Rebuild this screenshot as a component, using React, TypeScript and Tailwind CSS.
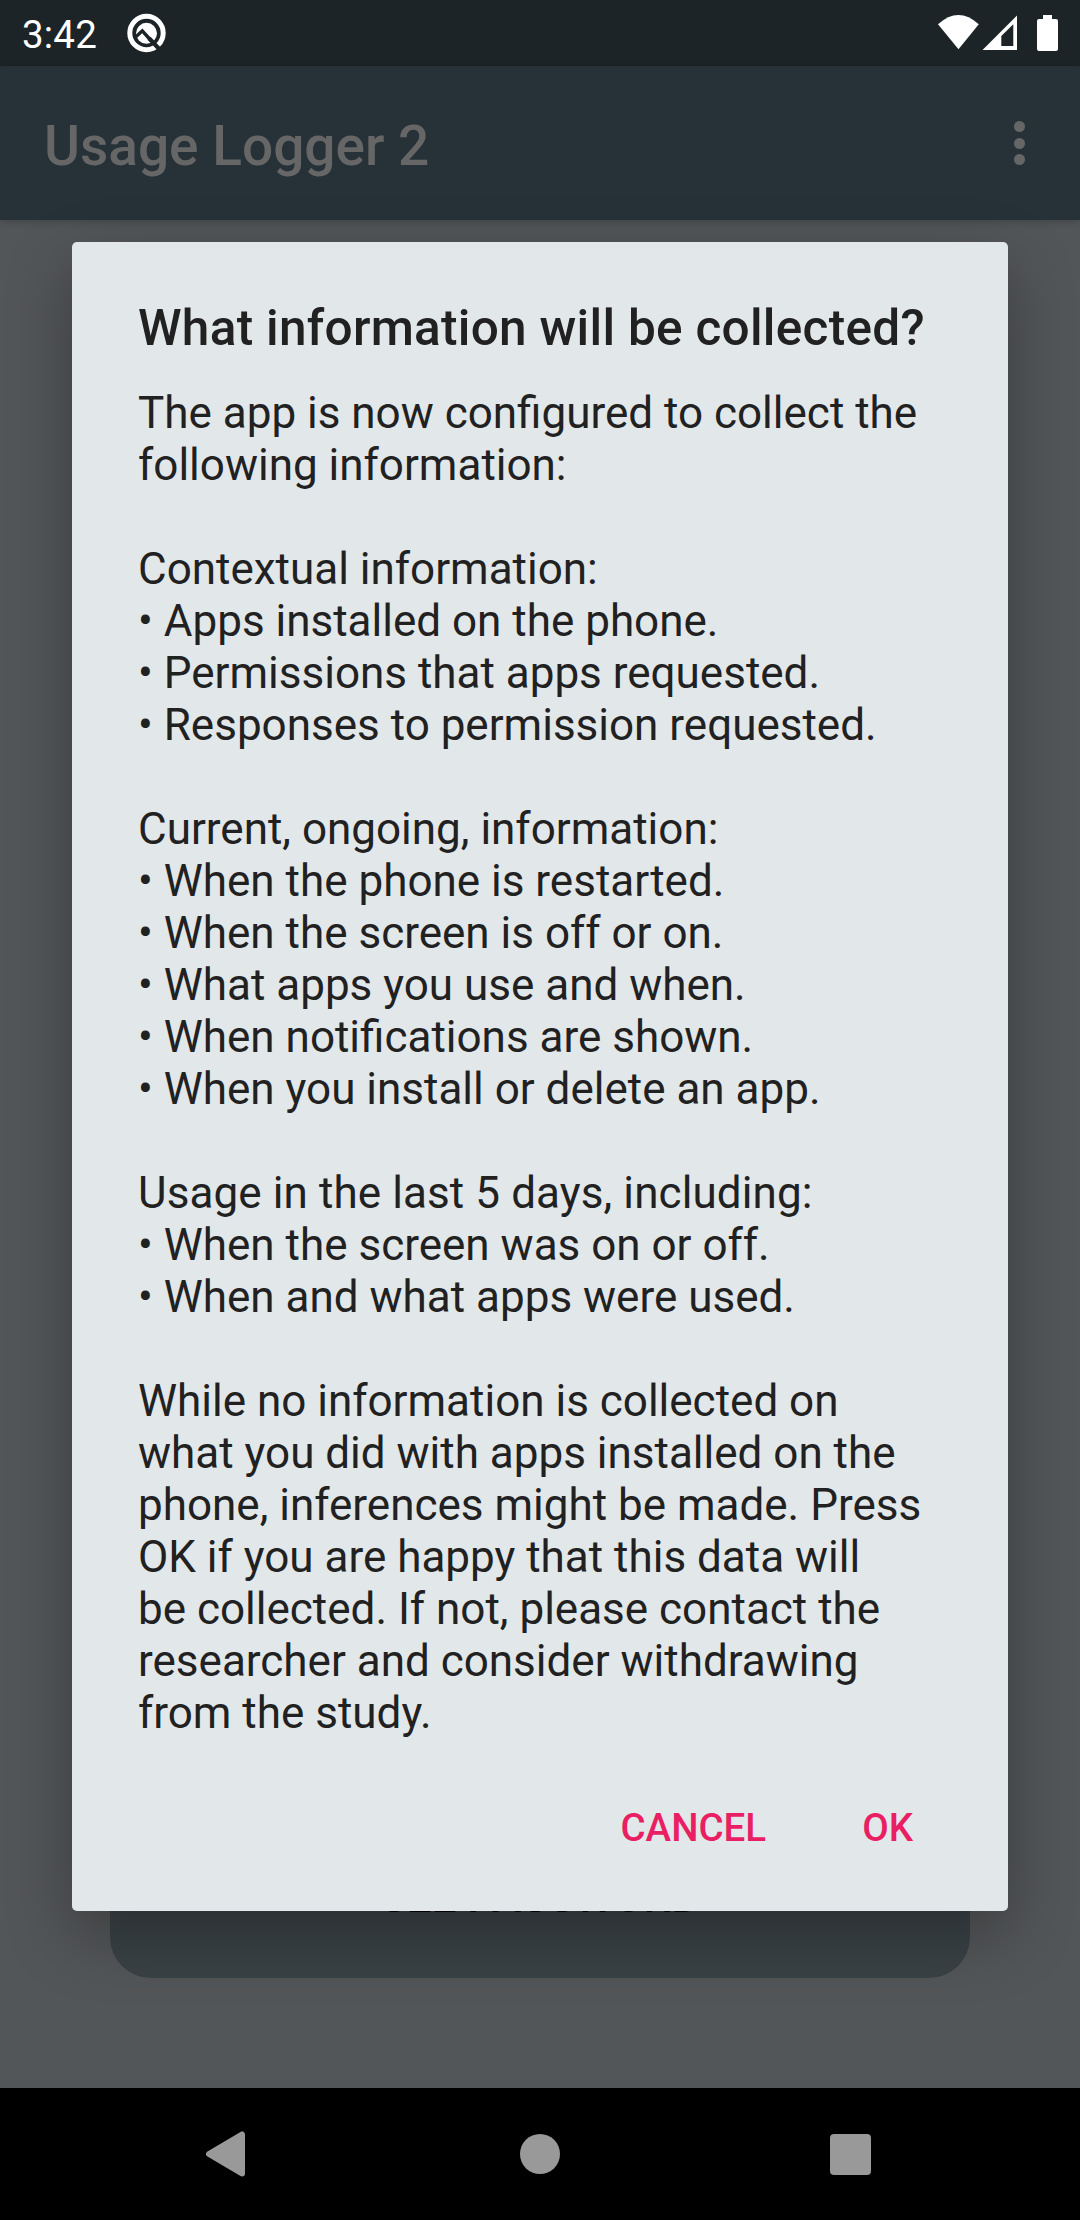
import React from "react";

const lines = [
  "The app is now configured to collect the",
  "following information:",
  "",
  "Contextual information:",
  "• Apps installed on the phone.",
  "• Permissions that apps requested.",
  "• Responses to permission requested.",
  "",
  "Current, ongoing, information:",
  "• When the phone is restarted.",
  "• When the screen is off or on.",
  "• What apps you use and when.",
  "• When notifications are shown.",
  "• When you install or delete an app.",
  "",
  "Usage in the last 5 days, including:",
  "• When the screen was on or off.",
  "• When and what apps were used.",
  "",
  "While no information is collected on",
  "what you did with apps installed on the",
  "phone, inferences might be made. Press",
  "OK if you are happy that this data will",
  "be collected. If not, please contact the",
  "researcher and consider withdrawing",
  "from the study.",
];

function StatusBar() {
  return (
    <div className="flex h-[66px] shrink-0 items-start bg-[#1c2428] pl-[22px] text-white">
      <span className="mt-3 w-[105px] text-[38.5px] leading-[45px] tracking-[0.2px]">3:42</span>
      <svg className="mt-[13px]" width="40" height="40" viewBox="0 0 40 40">
        <circle cx="19.5" cy="20" r="16.7" fill="none" stroke="#fff" strokeWidth="5" />
        <circle cx="19.5" cy="20.3" r="10.5" fill="#fff" />
        <path d="M7 25.5 15.3 17.8 24 27.5" fill="none" stroke="#1c2428" strokeWidth="3.4" />
        <path d="M22 25.2 36 40" fill="none" stroke="#1c2428" strokeWidth="4.2" />
      </svg>
      <svg className="ml-auto mr-[22px]" width="120" height="66" viewBox="0 0 120 66">
        <path d="M0 24.3Q20.4 5.7 40.8 24.3L20.5 49.3Z" fill="#fff" />
        <path d="M44.5 50 79 15.5V50ZM63.3 46H75.3V24.3L63.3 36Z" fill="#fff" fillRule="evenodd" />
        <path d="M105 15h9v4h4a2 2 0 0 1 2 2v28a2 2 0 0 1-2 2h-17a2 2 0 0 1-2-2V21a2 2 0 0 1 2-2h4z" fill="#fff" />
      </svg>
    </div>
  );
}

export default function App() {
  return (
    <div className="relative flex h-[2220px] w-[1080px] flex-col overflow-hidden bg-[#535658] font-['Roboto',sans-serif]">
      <StatusBar />
      <header className="z-10 flex h-[154px] shrink-0 items-center justify-between bg-[#263238] pr-[55px] pl-11 text-[#666] shadow-[0_2px_8px_rgba(0,0,0,0.2)]">
        <h1 className="mt-[5px] text-[55px] leading-16 font-medium">Usage Logger 2</h1>
        <div className="flex flex-col gap-[5.5px]">
          <i className="size-[11px] rounded-full bg-[#666]" />
          <i className="size-[11px] rounded-full bg-[#666]" />
          <i className="size-[11px] rounded-full bg-[#666]" />
        </div>
      </header>
      <main className="flex flex-1 flex-col justify-end px-[110px] pb-[110px]">
        <div className="flex h-[160px] items-end justify-center rounded-[41px] bg-[#3a4246] pb-[55px] text-[44px] leading-[52px] font-medium text-black">
          SEE PASSWORD
        </div>
      </main>
      <nav className="flex h-[132px] shrink-0 items-center justify-between bg-black pr-[209px] pl-[206px]">
        <svg width="39" height="46" viewBox="0 0 39 46">
          <path d="M36 3.5V42.5L3 23Z" fill="#999" stroke="#999" strokeWidth="6" strokeLinejoin="round" />
        </svg>
        <i className="ml-[5px] size-10 rounded-full bg-[#999]" />
        <i className="size-[41px] rounded-[4px] bg-[#999]" />
      </nav>

      <section
        role="dialog"
        className="absolute top-[242px] left-[72px] z-20 flex h-[1669px] w-[936px] flex-col rounded-[5px] bg-[#e2e7e9] pt-[57px] pr-[66px] pl-[66px] text-[#212121] shadow-[0_24px_66px_rgba(0,0,0,0.3)]"
      >
        <h2 className="text-[49.5px] leading-[58px] font-medium tracking-[0.29px] whitespace-nowrap">
          What information will be collected?
        </h2>
        <div className="mt-[30px] text-[44px] leading-[52px] whitespace-nowrap">
          {lines.map((line, i) => (
            <p key={i} className={line.startsWith("Usage") ? "h-[52px] tracking-[0.1px]" : "h-[52px]"}>
              {line}
            </p>
          ))}
        </div>
        <div className="mt-[66px] flex justify-end gap-[96px] pr-[29px] text-[38.5px] leading-[45px] font-medium text-[#e91e63]">
          <button>CANCEL</button>
          <button>OK</button>
        </div>
      </section>
    </div>
  );
}
